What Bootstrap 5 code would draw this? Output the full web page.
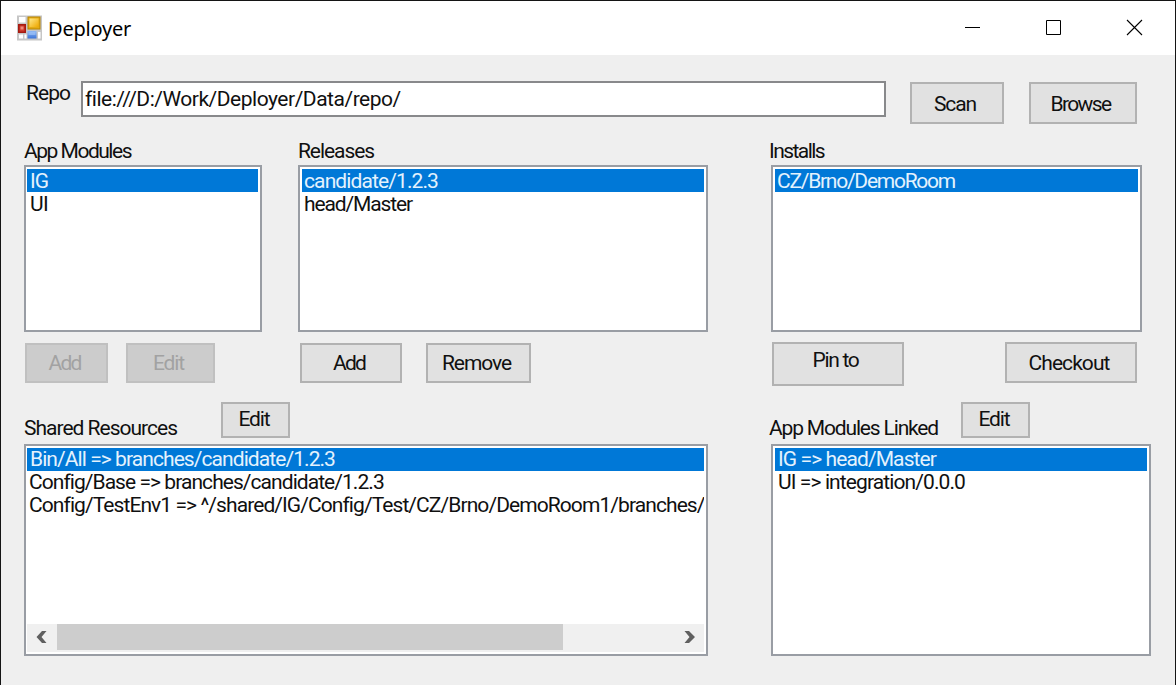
<!DOCTYPE html>
<html lang="en">
<head>
<meta charset="utf-8">
<title>Deployer</title>
<link href="https://cdn.jsdelivr.net/npm/bootstrap@5.3.0/dist/css/bootstrap.min.css" rel="stylesheet">
<style>
body{width:1176px;height:685px;overflow:hidden;background:#efefef;color:#101010;font-family:Roboto,"Liberation Sans",sans-serif;font-size:21px;line-height:24px}
.app-window{height:685px;border:1px solid #141414;border-bottom:0}
.title-bar{height:54px;background:#fff;padding-left:16px}
.title-text{font:20px/24px "Noto Sans",sans-serif;color:#000;margin:2px 0 0 6px}
.win-btn{width:81px;height:54px}
.fit{display:inline-block;white-space:pre}
.repo-row{margin:26px 0 0 25px;height:43px}
.repo-input{width:805px;height:36px;padding:0 2px;border:2px solid #88898b;border-radius:0;background:#fff;color:#101010;font-size:21px;line-height:32px;margin-left:11px}
.btn-win{--bs-btn-color:#101010;--bs-btn-bg:#e1e1e1;--bs-btn-border-color:#b2b2b2;--bs-btn-border-radius:0;--bs-btn-border-width:2px;--bs-btn-disabled-color:#a2a2a2;--bs-btn-disabled-bg:#cccccc;--bs-btn-disabled-border-color:#c0c0c0;--bs-btn-disabled-opacity:1;--bs-btn-padding-x:0;--bs-btn-padding-y:0;--bs-btn-line-height:24px;--bs-btn-font-size:21px;height:40px;flex:none;display:flex;justify-content:center;align-items:center}
.btn-edit{width:69px;height:36px;padding:0 3px 2px 0}
.upper{display:grid;grid-template-columns:238px 410px 373px;column-gap:36px;margin:15px 0 0 23px}
.upper>:last-child{margin-left:25px;width:374px}
.cap{height:24px;margin-bottom:2px}
.box{background:#fff;border:2px solid #999da4;padding:2px;overflow:hidden;display:flex;flex-direction:column}
.box-left{padding-left:1px}
.upper .box{height:167px}
.lower .box{height:212px}
.list-group{--bs-list-group-border-radius:0}
.entry{height:23px;line-height:23px;padding:0 0 0 2px;border:0;background:none;color:#101010;overflow:hidden;white-space:pre}
.upper .entry{line-height:25px}
.entry.active{margin:0;background:#0078d7;color:#e4f2fd}
.box-left .entry.active,.pad-more .entry{padding-left:3px}
.lower{margin:16px 0 0 23px}
.head-row{height:42px}
.scroll-track{height:28px;background:#f0f0f0}
.thumb{width:506px;height:26px;background:#cdcdcd}
</style>
</head>
<body>
<div class="app-window">
  <header class="title-bar d-flex align-items-center">
    <svg width="25" height="26" viewBox="0 0 25 26">
      <defs>
        <linearGradient id="gy" x2="1" y2="1"><stop stop-color="#ffe88a"/><stop offset="1" stop-color="#efa800"/></linearGradient>
        <linearGradient id="gb" x2="0" y2="1"><stop stop-color="#8fb8f4"/><stop offset="1" stop-color="#3c74d8"/></linearGradient>
      </defs>
      <rect width="25" height="25" y=".5" fill="#c6c6c6"/>
      <path d="M2 2h6.500v5.500H2zM2 19.500h4v4H2zM7.500 19.500h2v4h-2zM21 17h2.500v6.500H21z" fill="#fff"/>
      <rect x="10.500" y="1.500" width="13" height="13" fill="#b98500"/><rect x="11.500" y="2.500" width="11" height="11" fill="#e3ab16"/><rect x="12.500" y="3.500" width="9" height="8.500" fill="url(#gy)"/>
      <rect x="1" y="9" width="8" height="9" fill="#a61a10"/><rect x="2.500" y="10.500" width="5" height="6" fill="#cf3a2a"/><rect x="3.500" y="11.500" width="3" height="3" fill="#ee8a7c"/>
      <rect x="10.500" y="16" width="9" height="7.500" fill="url(#gb)"/><path d="M11.500 17h7v3h-7z" fill="#a5c8fa" opacity=".6"/>
    </svg>
    <span class="title-text fit" data-w="83">Deployer</span>
    <div class="ms-auto d-flex">
      <svg class="win-btn" viewBox="0 0 81 54"><path d="M33 26.500h15" stroke="#000"/></svg>
      <svg class="win-btn" viewBox="0 0 81 54"><path d="M33.500 19.500h14v14h-14z" fill="none" stroke="#000"/></svg>
      <svg class="win-btn" viewBox="0 0 81 54"><path d="M33 19l15 15M48 19l-15 15" stroke="#000" stroke-width="1.100"/></svg>
    </div>
  </header>

  <div class="repo-row d-flex align-items-start">
    <label class="fit" data-w="44">Repo</label>
    <div class="repo-input form-control"><span class="fit" data-w="315">file:///D:/Work/Deployer/Data/repo/</span></div>
    <button class="btn btn-win" style="width:94px;height:42px;margin:1px 0 0 24px;padding:2px 4px 0 0"><span class="fit" data-w="42">Scan</span></button>
    <button class="btn btn-win" style="width:108px;height:42px;margin:1px 0 0 25px;padding:2px 5px 0 0"><span class="fit" data-w="60">Browse</span></button>
  </div>

  <main class="upper">
    <section>
      <div class="cap"><span class="fit" data-w="107">App Modules</span></div>
      <div class="box box-left pad-more"><div class="list-group">
        <div class="list-group-item entry active"><span class="fit" data-w="18">IG</span></div>
        <div class="list-group-item entry"><span class="fit" data-w="18">UI</span></div>
      </div></div>
      <div class="d-flex" style="margin:11px 0 0 1px;gap:18px">
        <button class="btn btn-win" disabled style="width:83px;padding-right:4px"><span class="fit" data-w="32">Add</span></button>
        <button class="btn btn-win" disabled style="width:89px;padding-right:4px"><span class="fit" data-w="31">Edit</span></button>
      </div>
    </section>
    <section>
      <div class="cap"><span class="fit" data-w="76">Releases</span></div>
      <div class="box"><div class="list-group">
        <div class="list-group-item entry active"><span class="fit" data-w="134">candidate/1.2.3</span></div>
        <div class="list-group-item entry"><span class="fit" data-w="108">head/Master</span></div>
      </div></div>
      <div class="d-flex" style="margin:11px 0 0 2px;gap:24px">
        <button class="btn btn-win" style="width:102px;padding-right:4px"><span class="fit" data-w="32">Add</span></button>
        <button class="btn btn-win" style="width:105px;padding-right:4px"><span class="fit" data-w="69">Remove</span></button>
      </div>
    </section>
    <section>
      <div class="cap"><span class="fit" data-w="55">Installs</span></div>
      <div class="box" style="margin:0 1px 0 2px"><div class="list-group">
        <div class="list-group-item entry active"><span class="fit" data-w="178">CZ/Brno/DemoRoom</span></div>
      </div></div>
      <div class="d-flex align-items-start" style="margin:10px 0 0 3px;gap:101px">
        <button class="btn btn-win" style="width:132px;height:44px;padding:0 5px 8px 0"><span class="fit" data-w="46">Pin to</span></button>
        <button class="btn btn-win" style="width:132px;height:41px;padding-right:4px"><span class="fit" data-w="81">Checkout</span></button>
      </div>
    </section>
  </main>

  <div class="lower d-flex">
    <section style="width:684px">
      <div class="head-row d-flex align-items-start">
        <span class="fit" data-w="153" style="margin-top:14px">Shared Resources</span>
        <button class="btn btn-win btn-edit" style="margin-left:44px"><span class="fit" data-w="31">Edit</span></button>
      </div>
      <div class="box box-left"><div class="list-group">
        <div class="list-group-item entry active"><span class="fit" data-w="305">Bin/All =&gt; branches/candidate/1.2.3</span></div>
        <div class="list-group-item entry"><span class="fit" data-w="354">Config/Base =&gt; branches/candidate/1.2.3</span></div>
        <div class="list-group-item entry"><span class="fit" data-w="674">Config/TestEnv1 =&gt; ^/shared/IG/Config/Test/CZ/Brno/DemoRoom1/branches/</span></div>
      </div>
      <div class="scroll-track d-flex mt-auto">
        <svg width="30" height="28" viewBox="0 0 30 28"><path d="M19.500 7h-4.500L9.500 13l5.500 6h4.500l-5-6z" fill="#606060"/></svg>
        <div class="thumb"></div>
        <svg class="ms-auto" width="30" height="28" viewBox="0 0 30 28"><path d="M10.500 7h4.500l6 6-6 6h-4.500l5-6z" fill="#606060"/></svg>
      </div></div>
    </section>
    <section style="width:382px;margin-left:61px">
      <div class="head-row d-flex align-items-start">
        <span class="fit" data-w="169" style="margin-top:14px">App Modules Linked</span>
        <button class="btn btn-win btn-edit" style="margin-left:23px"><span class="fit" data-w="31">Edit</span></button>
      </div>
      <div class="box pad-more" style="margin-left:2px"><div class="list-group">
        <div class="list-group-item entry active"><span class="fit" data-w="158">IG =&gt; head/Master</span></div>
        <div class="list-group-item entry"><span class="fit" data-w="187">UI =&gt; integration/0.0.0</span></div>
      </div></div>
    </section>
  </div>
</div>
<script src="https://cdn.jsdelivr.net/npm/bootstrap@5.3.0/dist/js/bootstrap.bundle.min.js"></script>
<script>
// Track each caption to its design width.
document.querySelectorAll('.fit').forEach(el => {
  const w = +el.dataset.w, n = el.textContent.length;
  el.style.letterSpacing = (w - el.getBoundingClientRect().width) / n + 'px';
});
</script>
</body>
</html>
